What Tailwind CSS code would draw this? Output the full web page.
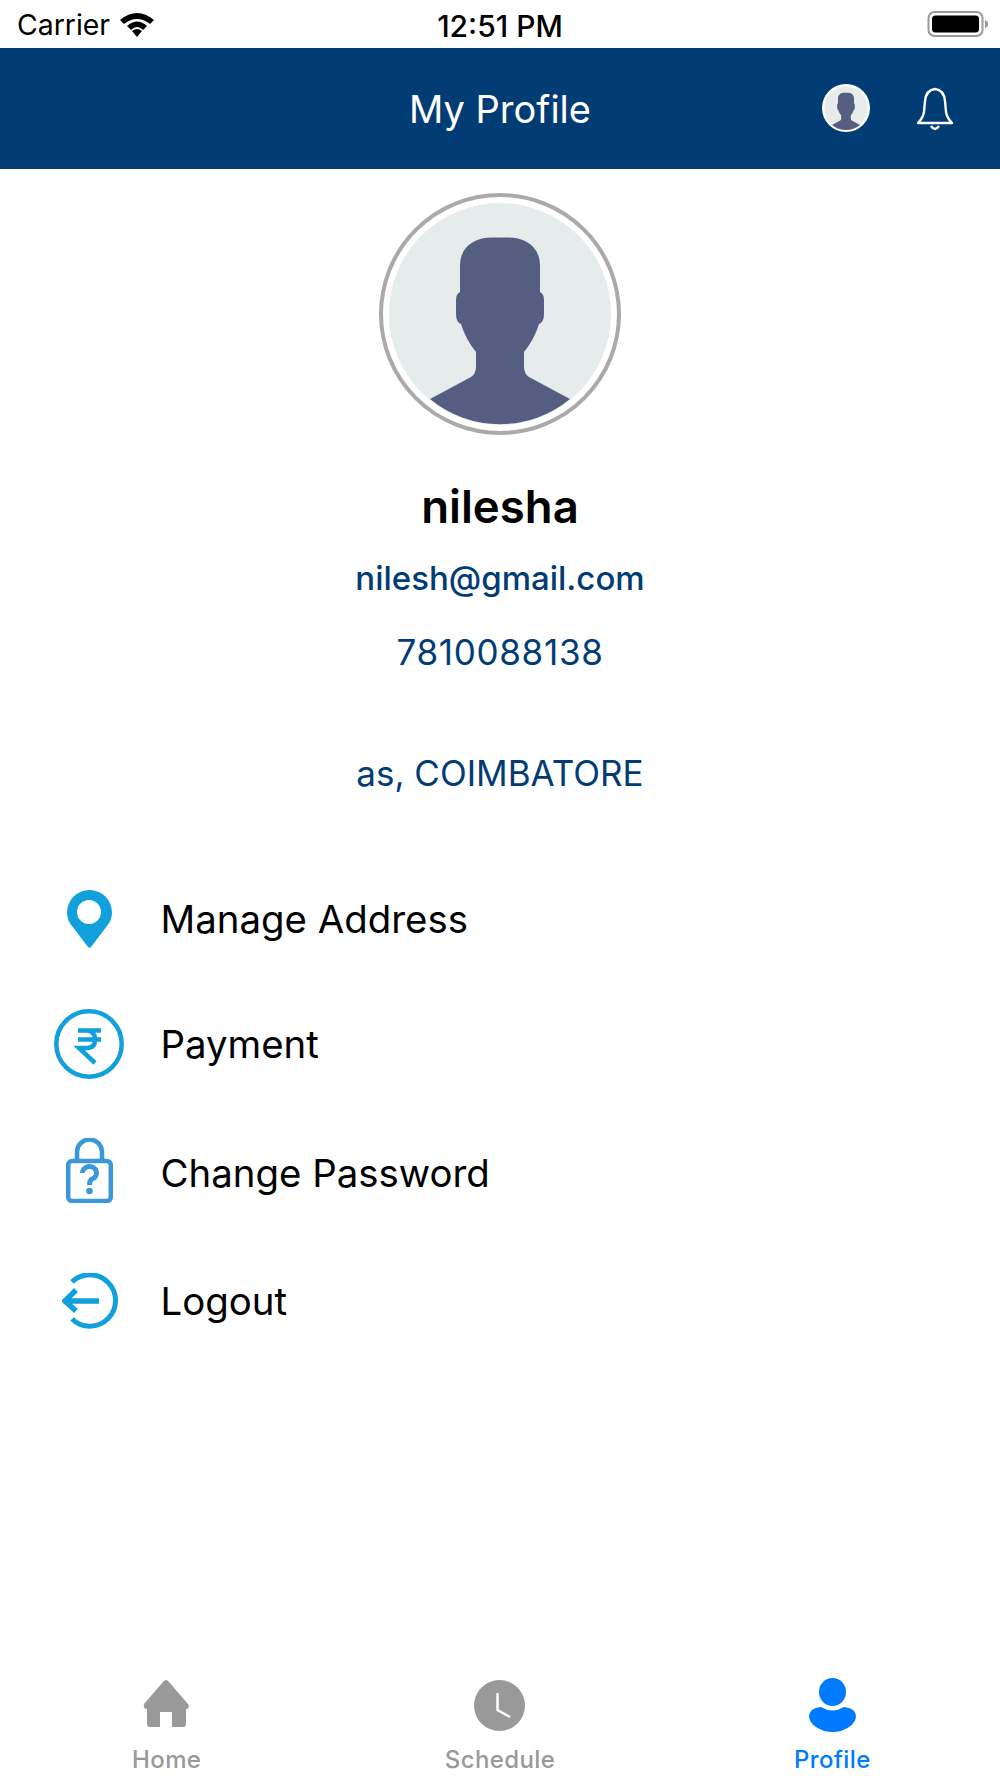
<!DOCTYPE html>
<html lang="en">
<head>
    <meta charset="UTF-8" />
    <meta name="viewport" content="width=device-width, initial-scale=1.0"/>
    <title>My Profile</title>
    <script src="https://cdn.jsdelivr.net/npm/@tailwindcss/browser@4"></script>
</head>
<body class="bg-white text-black font-['Inter',sans-serif] h-[1778px] w-[1000px] flex flex-col overflow-hidden">

<!-- Status bar -->
<div class="h-[48px] grid grid-cols-3 items-center pl-[17px] pr-[11px]">
    <div class="flex items-center gap-[9px]">
        <span class="text-[28.4px] leading-none pt-[3px]">Carrier</span>
        <svg width="36" height="28" viewBox="0 0 36 28">
            <path d="M1 10 Q18 -4 35 10 L31 14 Q18 4 5 14Z M8 16 Q18 7 28 16 L24 20 Q18 14 12 20Z M13 21 Q18 17 23 21 L18 27Z" fill="#000"/>
        </svg>
    </div>
    <div class="text-center text-[30px] font-medium leading-none pt-[3px] pr-[6px] whitespace-nowrap">12:51 PM</div>
    <div class="flex justify-end">
        <svg width="62" height="28" viewBox="0 0 62 28">
            <rect x="1.5" y="2" width="54" height="24" rx="6" fill="none" stroke="#999" stroke-width="2"/>
            <rect x="5" y="5.5" width="47" height="17" rx="3.5" fill="#000"/>
            <path d="M58 10 Q61 11 61 14 Q61 17 58 18Z" fill="#999"/>
        </svg>
    </div>
</div>

<!-- Navbar -->
<nav class="h-[121px] bg-[#023c75] relative flex items-center justify-center">
    <h1 class="text-white text-[38px] leading-none">My Profile</h1>
    <svg class="absolute left-[822px] top-[36px]" width="48" height="48" viewBox="0 0 240 240">
        <circle cx="120" cy="120" r="120" fill="#fff"/>
        <circle cx="120" cy="120" r="108" fill="#e6ecec"/>
        <path d="M50 205 L91 183 Q96 180 96 172 L96 158 Q86 146 81 130 Q76 128 76 120 L76 106 Q76 100 80 98 L80 72 C80 52 95 43.5 112 43.5 L128 43.5 C145 43.5 160 52 160 72 L160 98 Q164 100 164 106 L164 120 Q164 128 159 130 Q154 146 144 158 L144 172 Q144 180 149 183 L190 205 A110 110 0 0 1 50 205Z" fill="#555e80"/>
    </svg>
    <svg class="absolute left-[915px] top-[38px]" width="40" height="46" viewBox="0 0 40 46" fill="none" stroke="#fff" stroke-width="2.4">
        <path d="M20 3 Q11 4 10 15 L9 26 Q8 32 3 37 L37 37 Q32 32 31 26 L30 15 Q29 4 20 3Z" stroke-linejoin="round"/>
        <path d="M16 40 Q20 46 24 40"/>
    </svg>
</nav>

<!-- Profile -->
<section class="flex flex-col items-center pt-[24px]">
    <div class="w-[242px] h-[242px] rounded-full border-4 border-[#aaaaaa] bg-white flex items-center justify-center">
        <svg class="shrink-0" width="240" height="240" viewBox="0 0 240 240">
            <circle cx="120" cy="120" r="111" fill="#e6ecec"/>
            <path d="M50 205 L91 183 Q96 180 96 172 L96 158 Q86 146 81 130 Q76 128 76 120 L76 106 Q76 100 80 98 L80 72 C80 52 95 43.5 112 43.5 L128 43.5 C145 43.5 160 52 160 72 L160 98 Q164 100 164 106 L164 120 Q164 128 159 130 Q154 146 144 158 L144 172 Q144 180 149 183 L190 205 A110 110 0 0 1 50 205Z" fill="#555e80"/>
        </svg>
    </div>
    <h2 class="mt-[46px] text-[45.5px] leading-[52px] font-semibold">nilesha</h2>
    <p class="mt-[25px] text-[33px] leading-[40px] font-medium text-[#023c75]">nilesh@gmail.com</p>
    <p class="mt-[34px] text-[35px] leading-[40px] tracking-[0.7px] text-[#023c75]">7810088138</p>
    <p class="mt-[81px] text-[35px] leading-[40px] text-[#023c75]">as, COIMBATORE</p>
</section>

<!-- Menu -->
<ul class="mt-[64px] text-[38.4px]">
    <li class="h-[124px] flex items-center">
        <div class="w-[178px] -mr-[17.5px] flex justify-center">
            <svg width="45" height="58" viewBox="0 0 45 58">
                <path fill-rule="evenodd" d="M22.5 0 A22.5 22.5 0 0 1 45 22.5 Q45 30 40 36 L24 57 Q22.5 58.5 21 57 L5 36 Q0 30 0 22.5 A22.5 22.5 0 0 1 22.5 0Z M22 10 A12 12 0 1 0 22 34 A12 12 0 1 0 22 10Z" fill="#12a0dd"/>
            </svg>
        </div>
        <span class="pt-[2px]">Manage Address</span>
    </li>
    <li class="h-[126px] flex items-center">
        <div class="w-[178px] -mr-[17.5px] flex justify-center">
            <svg width="70" height="70" viewBox="0 0 70 70" fill="none" stroke="#12a0dd">
                <circle cx="35" cy="35" r="32.7" stroke-width="4.5"/>
                <path d="M24 21.5 H47 M24 30.5 H47 M24 21.5 H33 Q41 22 41 30.5 Q41 39 33 39 H25 L41 54" stroke-width="4.5"/>
            </svg>
        </div>
        <span class="pt-[2px]">Payment</span>
    </li>
    <li class="h-[132px] flex items-center">
        <div class="w-[178px] -mr-[17.5px] flex justify-center">
            <svg class="mb-[6px] blur-[0.4px]" width="47" height="65" viewBox="0 0 47 65" fill="none" stroke="#3b97dc" stroke-width="4.5">
                <rect x="2.2" y="23" width="42.6" height="40" rx="4"/>
                <path d="M11 22 V14 A12.5 12.5 0 0 1 36 14 V22"/>
                <path d="M16.5 35 A7 6.5 0 1 1 26 41 Q23.5 42.5 23.5 47" stroke-width="5"/>
                <circle cx="23.5" cy="53" r="3.3" fill="#3b97dc" stroke="none"/>
            </svg>
        </div>
        <span class="pt-[2px]">Change Password</span>
    </li>
    <li class="h-[124px] flex items-center">
        <div class="w-[178px] -mr-[17.5px] flex justify-center pl-[2px]">
            <svg width="56" height="56" viewBox="0 0 56 56" fill="none" stroke="#12a0dd" stroke-width="5">
                <path d="M10 9 A25.7 25.7 0 1 1 10 46"/>
                <path d="M37 28 H4 M14 17 L3 28 L14 38" stroke-width="5.5"/>
            </svg>
        </div>
        <span class="pt-[2px]">Logout</span>
    </li>
</ul>

<div class="flex-1"></div>

<!-- Tab bar -->
<div class="h-[100px] grid grid-cols-3 text-[24px] leading-[26px] tracking-[0.4px] font-medium text-[#999999]">
    <div class="flex flex-col items-center">
        <div class="h-[69px] pt-[2px] pr-[2px]">
            <svg class="blur-[0.6px]" width="48" height="47" viewBox="0 0 48 47">
                <path d="M24 0 Q25 0 27 2 L46 24 Q48 28 45 29 L44 29 V44 Q44 47 41 47 H30 V32 H18 V47 H8 Q5 47 5 44 V29 Q1 29 2 24 L21 2 Q23 0 24 0Z" fill="#999999"/>
            </svg>
        </div>
        <span>Home</span>
    </div>
    <div class="flex flex-col items-center">
        <div class="h-[69px] pt-[2px]">
            <svg class="blur-[0.6px]" width="51" height="51" viewBox="0 0 51 51">
                <circle cx="25.5" cy="25.5" r="25.5" fill="#999999"/>
                <path d="M23.5 13 V30 L36 37" fill="none" stroke="#fff" stroke-width="2.5"/>
            </svg>
        </div>
        <span>Schedule</span>
    </div>
    <div class="flex flex-col items-center text-[#007aff]">
        <div class="h-[69px] pr-[2px]">
            <svg class="blur-[0.6px]" width="47" height="54" viewBox="0 0 47 54" fill="#007aff">
                <ellipse cx="23.5" cy="14" rx="13.5" ry="14"/>
                <path d="M12 29 Q23.5 36 35 29 Q47 30 47 39 Q46 48 32 53 Q23.5 55 15 53 Q1 48 0 39 Q0 30 12 29Z"/>
            </svg>
        </div>
        <span class="pr-[2px]">Profile</span>
    </div>
</div>

</body>
</html>
